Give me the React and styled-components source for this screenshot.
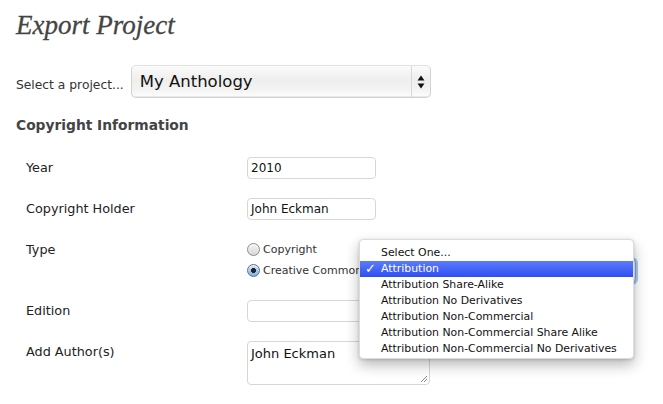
import React from "react";
import styled, { createGlobalStyle } from "styled-components";

const Global = createGlobalStyle`
  html, body { margin: 0; padding: 0; background: #fff; }
  body { font-family: "DejaVu Sans", "Noto Sans", sans-serif; color: #333; }
  * { box-sizing: border-box; }
`;

const Page = styled.div`
  width: 663px;
  height: 404px;
  padding: 0 16px;
  overflow: hidden;
`;

const Title = styled.h1`
  margin: 10px 0 0;
  font-family: "Liberation Serif", "DejaVu Serif", serif;
  font-style: italic;
  font-weight: normal;
  font-size: 27px;
  line-height: 30px;
  color: #444;
  -webkit-text-stroke: 0.3px #444;
`;

const ProjectRow = styled.div`
  display: flex;
  align-items: center;
  margin-top: 25px;
  gap: 7px;
`;

const SmallLabel = styled.span`
  font-size: 12.3px;
  color: #333;
  padding-top: 6px;
`;

const BigSelect = styled.div`
  display: flex;
  width: 300px;
  height: 33px;
  border: 1px solid #d2d2d2;
  border-top-color: #e2e2e2;
  border-radius: 5px;
  background: linear-gradient(#fbfbfb 0%, #eeeeee 45%, #f3f3f3 75%, #fdfdfd 100%);
  box-shadow: inset 0 -1px 0 #e8e8e8;
`;

const BigSelectText = styled.div`
  flex: 1;
  padding-left: 8px;
  font-size: 16.5px;
  line-height: 31px;
  color: #111;
`;

const ArrowCell = styled.div`
  width: 19px;
  border-left: 1px solid #d8d8d8;
  display: flex;
  align-items: center;
  justify-content: center;
`;

const Heading = styled.h2`
  margin: 17px 0 0;
  font-size: 13.8px;
  font-weight: bold;
  line-height: 20px;
  color: #444;
`;

const Form = styled.div`
  margin-top: 22px;
  padding-left: 10px;
  display: flex;
  flex-direction: column;
  gap: 19px;
`;

const Row = styled.div`
  display: flex;
  align-items: flex-start;
`;

const Label = styled.div`
  width: 221px;
  flex: none;
  font-size: 12.8px;
  line-height: 22px;
  color: #222;
`;

const TextBox = styled.div`
  width: ${(p) => p.$w || 129}px;
  height: ${(p) => p.$h || 22}px;
  border: 1px solid #d6d6d6;
  border-radius: 4px;
  background: #fff;
  padding: ${(p) => (p.$area ? "3px 3px" : "0 3px")};
  font-size: ${(p) => (p.$area ? "13px" : "12px")};
  line-height: ${(p) => (p.$area ? "18px" : "21px")};
  color: #111;
  position: relative;
`;

const Grip = styled.svg`
  position: absolute;
  right: 1px;
  bottom: 1px;
`;

const TypeField = styled.div`
  position: relative;
  display: flex;
  flex-direction: column;
  width: 389px;
`;

const RadioLine = styled.div`
  display: flex;
  align-items: center;
  height: 21px;
  gap: 3px;
  font-size: 11px;
  color: #333;
`;

const Radio = styled.span`
  width: 13px;
  height: 13px;
  flex: none;
  border-radius: 50%;
  border: 1px solid ${(p) => (p.$on ? "#5a6f88" : "#8a8a8a")};
  background: ${(p) =>
    p.$on
      ? "radial-gradient(circle at 50% 50%, #1a2330 0 2.2px, transparent 2.8px), linear-gradient(#cfe3f7, #7fb0e0)"
      : "linear-gradient(#f4f4f4, #d8d8d8)"};
  box-shadow: inset 0 1px 1px rgba(255,255,255,0.8);
`;

const HiddenSelect = styled.div`
  margin-left: auto;
  width: 260px;
  height: 24px;
  border-radius: 4px;
  border: 1px solid #7aa7d8;
  box-shadow: 0 0 0 2px rgba(100, 160, 220, 0.55);
  background: #f2f2f2;
`;

const Popup = styled.div`
  position: absolute;
  left: 112px;
  top: 0;
  width: 275px;
  height: 120px;
  padding-top: 5px;
  background: #fff;
  border: 1px solid #dcdcdc;
  border-radius: 4px;
  box-shadow: 0 6px 14px rgba(0, 0, 0, 0.28), 0 1px 3px rgba(0, 0, 0, 0.15);
  z-index: 2;
`;

const Option = styled.div`
  position: relative;
  height: 16px;
  line-height: 16px;
  padding-left: 21px;
  font-size: 10.9px;
  white-space: nowrap;
  color: ${(p) => (p.$active ? "#fff" : "#111")};
  background: ${(p) => (p.$active ? "linear-gradient(#5b7cfa, #2f4ef2)" : "transparent")};
`;

const Check = styled.span`
  position: absolute;
  left: 5px;
  top: 0;
  font-size: 13px;
  font-weight: bold;
`;

const options = [
  "Select One...",
  "Attribution",
  "Attribution Share-Alike",
  "Attribution No Derivatives",
  "Attribution Non-Commercial",
  "Attribution Non-Commercial Share Alike",
  "Attribution Non-Commercial No Derivatives",
];

export default function App() {
  return (
    <Page>
      <Global />
      <Title>Export Project</Title>
      <ProjectRow>
        <SmallLabel>Select a project...</SmallLabel>
        <BigSelect>
          <BigSelectText>My Anthology</BigSelectText>
          <ArrowCell>
            <svg width="8" height="14" viewBox="0 0 8 14">
              <path d="M4 0.5 L7.5 5.5 L0.5 5.5 Z" fill="#111" />
              <path d="M4 13.5 L7.5 8.5 L0.5 8.5 Z" fill="#111" />
            </svg>
          </ArrowCell>
        </BigSelect>
      </ProjectRow>
      <Heading>Copyright Information</Heading>
      <Form>
        <Row>
          <Label>Year</Label>
          <TextBox>2010</TextBox>
        </Row>
        <Row>
          <Label>Copyright Holder</Label>
          <TextBox>John Eckman</TextBox>
        </Row>
        <Row>
          <Label>Type</Label>
          <TypeField>
            <RadioLine>
              <Radio />
              <span>Copyright</span>
            </RadioLine>
            <RadioLine>
              <Radio $on />
              <span>Creative Commons</span>
              <HiddenSelect />
            </RadioLine>
            <Popup>
              {options.map((o, i) => (
                <Option key={o} $active={i === 1}>
                  {i === 1 && <Check>✓</Check>}
                  {o}
                </Option>
              ))}
            </Popup>
          </TypeField>
        </Row>
        <Row>
          <Label>Edition</Label>
          <TextBox />
        </Row>
        <Row>
          <Label>Add Author(s)</Label>
          <TextBox $w={183} $h={44} $area>
            John Eckman
            <Grip width="9" height="9" viewBox="0 0 9 9">
              <path d="M8 2 L2 8 M8 5 L5 8" stroke="#888" strokeWidth="1" />
            </Grip>
          </TextBox>
        </Row>
      </Form>
    </Page>
  );
}
